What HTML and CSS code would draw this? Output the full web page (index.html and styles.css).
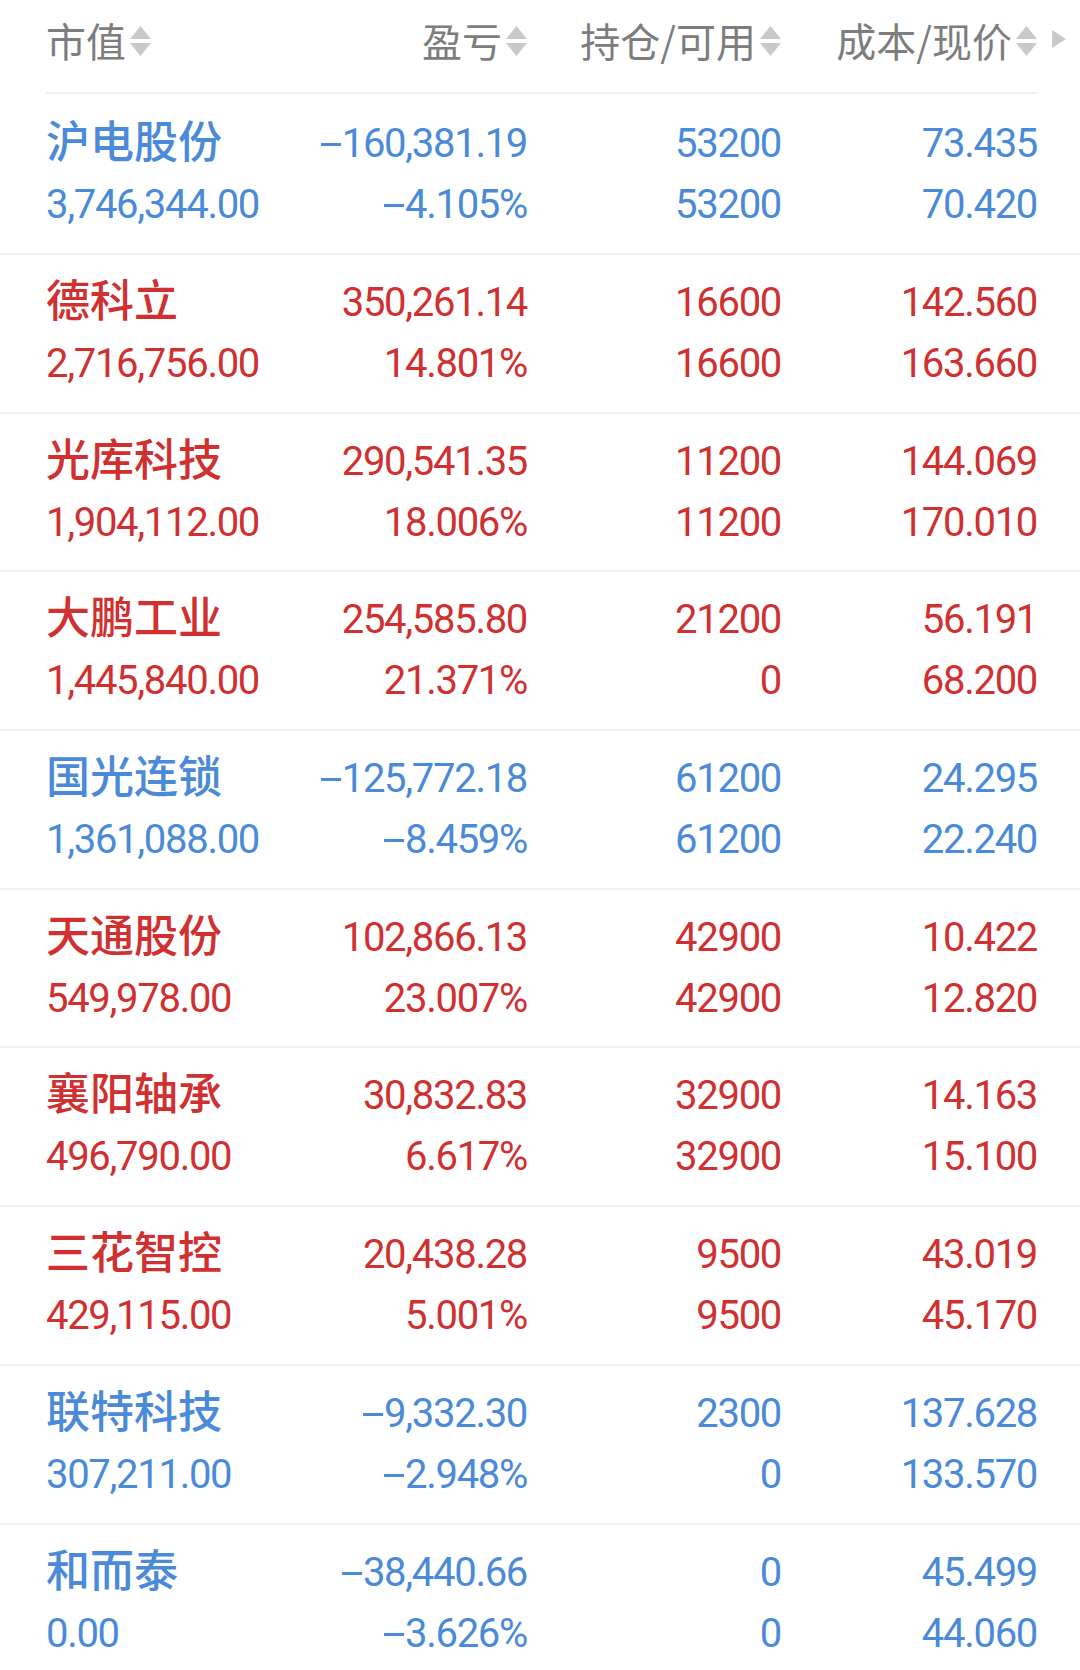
FILE: index.html
```html
<!DOCTYPE html>
<html lang="zh-CN">
<head>
<meta charset="utf-8">
<title>持仓</title>
<link rel="stylesheet" href="styles.css">
</head>
<body>
<div class="page">
  <div class="header">
    <div class="head-grid">
      <div class="hcell left"><span class="htext">市值</span><svg class="sort" viewBox="0 0 21 30" width="21" height="30"><polygon points="10.5,0 21,13 0,13"/><polygon points="0,17 21,17 10.5,30"/></svg></div>
      <div class="hcell"><span class="htext">盈亏</span><svg class="sort" viewBox="0 0 21 30" width="21" height="30"><polygon points="10.5,0 21,13 0,13"/><polygon points="0,17 21,17 10.5,30"/></svg></div>
      <div class="hcell"><span class="htext">持仓/可用</span><svg class="sort" viewBox="0 0 21 30" width="21" height="30"><polygon points="10.5,0 21,13 0,13"/><polygon points="0,17 21,17 10.5,30"/></svg></div>
      <div class="hcell"><span class="htext">成本/现价</span><svg class="sort" viewBox="0 0 21 30" width="21" height="30"><polygon points="10.5,0 21,13 0,13"/><polygon points="0,17 21,17 10.5,30"/></svg></div>
    </div>
    <svg class="more" viewBox="0 0 14 18" width="14" height="18"><polygon points="0,0 14,9 0,18"/></svg>
  </div>

  <div class="row down first">
    <div class="cell left"><div class="name">沪电股份</div><div class="num">3,746,344.00</div></div>
    <div class="cell"><div class="num"><span class="m">-</span>160,381.19</div><div class="num"><span class="m">-</span>4.105%</div></div>
    <div class="cell"><div class="num">53200</div><div class="num">53200</div></div>
    <div class="cell"><div class="num">73.435</div><div class="num">70.420</div></div>
  </div>
  <div class="row up">
    <div class="cell left"><div class="name">德科立</div><div class="num">2,716,756.00</div></div>
    <div class="cell"><div class="num">350,261.14</div><div class="num">14.801%</div></div>
    <div class="cell"><div class="num">16600</div><div class="num">16600</div></div>
    <div class="cell"><div class="num">142.560</div><div class="num">163.660</div></div>
  </div>
  <div class="row up">
    <div class="cell left"><div class="name">光库科技</div><div class="num">1,904,112.00</div></div>
    <div class="cell"><div class="num">290,541.35</div><div class="num">18.006%</div></div>
    <div class="cell"><div class="num">11200</div><div class="num">11200</div></div>
    <div class="cell"><div class="num">144.069</div><div class="num">170.010</div></div>
  </div>
  <div class="row up">
    <div class="cell left"><div class="name">大鹏工业</div><div class="num">1,445,840.00</div></div>
    <div class="cell"><div class="num">254,585.80</div><div class="num">21.371%</div></div>
    <div class="cell"><div class="num">21200</div><div class="num">0</div></div>
    <div class="cell"><div class="num">56.191</div><div class="num">68.200</div></div>
  </div>
  <div class="row down">
    <div class="cell left"><div class="name">国光连锁</div><div class="num">1,361,088.00</div></div>
    <div class="cell"><div class="num"><span class="m">-</span>125,772.18</div><div class="num"><span class="m">-</span>8.459%</div></div>
    <div class="cell"><div class="num">61200</div><div class="num">61200</div></div>
    <div class="cell"><div class="num">24.295</div><div class="num">22.240</div></div>
  </div>
  <div class="row up">
    <div class="cell left"><div class="name">天通股份</div><div class="num">549,978.00</div></div>
    <div class="cell"><div class="num">102,866.13</div><div class="num">23.007%</div></div>
    <div class="cell"><div class="num">42900</div><div class="num">42900</div></div>
    <div class="cell"><div class="num">10.422</div><div class="num">12.820</div></div>
  </div>
  <div class="row up">
    <div class="cell left"><div class="name">襄阳轴承</div><div class="num">496,790.00</div></div>
    <div class="cell"><div class="num">30,832.83</div><div class="num">6.617%</div></div>
    <div class="cell"><div class="num">32900</div><div class="num">32900</div></div>
    <div class="cell"><div class="num">14.163</div><div class="num">15.100</div></div>
  </div>
  <div class="row up">
    <div class="cell left"><div class="name">三花智控</div><div class="num">429,115.00</div></div>
    <div class="cell"><div class="num">20,438.28</div><div class="num">5.001%</div></div>
    <div class="cell"><div class="num">9500</div><div class="num">9500</div></div>
    <div class="cell"><div class="num">43.019</div><div class="num">45.170</div></div>
  </div>
  <div class="row down">
    <div class="cell left"><div class="name">联特科技</div><div class="num">307,211.00</div></div>
    <div class="cell"><div class="num"><span class="m">-</span>9,332.30</div><div class="num"><span class="m">-</span>2.948%</div></div>
    <div class="cell"><div class="num">2300</div><div class="num">0</div></div>
    <div class="cell"><div class="num">137.628</div><div class="num">133.570</div></div>
  </div>
  <div class="row down">
    <div class="cell left"><div class="name">和而泰</div><div class="num">0.00</div></div>
    <div class="cell"><div class="num"><span class="m">-</span>38,440.66</div><div class="num"><span class="m">-</span>3.626%</div></div>
    <div class="cell"><div class="num">0</div><div class="num">0</div></div>
    <div class="cell"><div class="num">45.499</div><div class="num">44.060</div></div>
  </div>
</div>
</body>
</html>
```

FILE: styles.css
```css
html, body {
  margin: 0;
  padding: 0;
  background: #ffffff;
}

.page {
  width: 1080px;
  height: 1670px;
  overflow: hidden;
  font-family: Roboto, "Noto Sans CJK SC", sans-serif;
}

.header {
  display: flex;
  align-items: center;
  padding-left: 46px;
}

.head-grid {
  display: grid;
  grid-template-columns: 240px 241px 254px 256px;
  height: 80px;
  padding-bottom: 12px;
  border-bottom: 2px solid #efefef;
}

.hcell {
  display: flex;
  align-items: center;
  justify-content: flex-end;
}

.hcell.left {
  justify-content: flex-start;
}

.htext {
  font-family: "Noto Sans CJK SC", sans-serif;
  font-size: 40px;
  color: #7d7d7d;
  line-height: 42px;
}

.sort {
  margin-left: 4px;
  margin-top: 2px;
  fill: #c9c9c9;
  flex: none;
}

.more {
  margin-left: 15px;
  margin-bottom: 16px;
  fill: #c9c9c9;
  flex: none;
}

.row {
  display: grid;
  grid-template-columns: 240px 241px 254px 256px;
  padding: 17px 43px 0 46px;
  height: 139.7px;
  border-bottom: 2px solid #efefef;
}

.row.first {
  padding-top: 19px;
  height: 140px;
}

.row.up {
  color: #d03030;
}

.row.down {
  color: #4a8ad8;
}

.cell {
  text-align: right;
  white-space: nowrap;
}

.cell.left {
  text-align: left;
}

.num {
  font-family: Roboto, sans-serif;
  font-size: 40px;
  letter-spacing: -1.3px;
  line-height: 61px;
  height: 61px;
}

.m {
  display: inline-block;
  width: 22px;
  text-align: center;
  letter-spacing: 0;
  transform: scaleX(2.1);
}

.name {
  font-family: "Noto Sans CJK SC", sans-serif;
  font-size: 44px;
  font-weight: 500;
  line-height: 61px;
  height: 61px;
  margin-top: -4px;
  margin-bottom: 4px;
}
```
